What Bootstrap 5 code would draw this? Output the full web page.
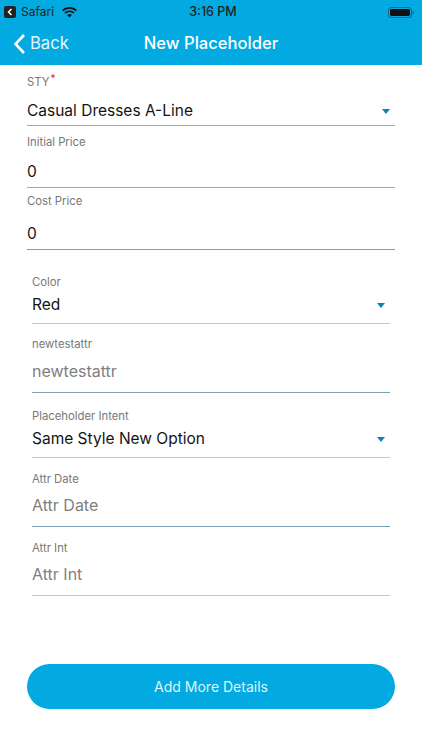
<!DOCTYPE html>
<html lang="en">
<head>
<meta charset="utf-8">
<title>New Placeholder</title>
<link href="https://cdn.jsdelivr.net/npm/bootstrap@5.3.0/dist/css/bootstrap.min.css" rel="stylesheet">
<style>
html,body{height:750px;overflow:hidden;background:#fff;}
body{font-family:Inter,"Liberation Sans",sans-serif;color:#111;}
.app-top{background:#02aae1;height:65px;}
.stat-bar{height:22px;padding:2px 8px 0 4px;font-size:12px;color:#222;}
.stat-left{width:160px;gap:5px;}
.stat-wifi{margin-left:3px;}
.stat-time{font-weight:500;font-size:12.5px;padding-left:8px;}
.stat-right{width:160px;}
.back-tile{width:12px;height:12px;background:#222;border-radius:2px;}
.nav-row{height:43px;padding-top:1px;color:#fff;}
.back-side{left:13px;top:0;bottom:0;font-size:16.6px;color:#e4f6fc;gap:4px;}
.nav-heading{font-size:16.6px;font-weight:500;margin:0;}
.form-wrap{height:599px;}
.group-a{padding:0 27px;}
.group-b{padding:0 32px;}
.fld{border-bottom:1px solid #86afc4;}
.fld-lite{border-bottom-color:#aecde0;}
.fld-dark{border-bottom-color:#7a9fb6;}
.fld-label{font-size:11.3px;line-height:14px;color:#777;}
.fld-value{font-size:15.5px;line-height:22px;color:#141414;}
.fld-ghost{color:#808080;font-size:16px;}
.req{color:#e0242c;font-size:10px;line-height:0;position:relative;top:-4px;left:1px;}
.caret-tri{width:0;height:0;border-left:4.5px solid transparent;border-right:4.5px solid transparent;border-top:5px solid #0f7fb5;margin-right:5px;}
.h-sty{height:61px;padding-top:10px;}
.h-sty .fld-value{margin-top:11px;}
.h-init{height:62px;padding-top:9px;}
.h-init .fld-value{margin-top:12px;}
.h-cost{height:62px;padding-top:6px;}
.h-cost .fld-value{margin-top:15px;}
.h-color{height:74px;padding-top:25px;}
.h-color .fld-value{margin-top:5px;}
.h-newt{height:69px;padding-top:13px;}
.h-newt .fld-value{margin-top:9px;}
.h-intent{height:65px;padding-top:16px;}
.h-intent .fld-value{margin-top:5px;}
.h-date{height:69px;padding-top:14px;}
.h-date .fld-value{margin-top:8px;}
.h-int{height:69px;padding-top:14px;}
.h-int .fld-value{margin-top:8px;}
.more-btn{height:45px;margin:68px 27px 0;width:368px;background:#02aae1;border:0;border-radius:23px;color:#dff5fc;font-size:14px;font-weight:400;display:block;padding:0;}
.more-btn:hover{background:#02aae1;color:#dff5fc;}
</style>
</head>
<body>
<header class="app-top">
  <div class="stat-bar d-flex align-items-center justify-content-between">
    <div class="stat-left d-flex align-items-center">
      <span class="back-tile d-flex align-items-center justify-content-center">
        <svg width="6" height="8" viewBox="0 0 6 8"><path d="M4.5 1 1.5 4l3 3" fill="none" stroke="#fff" stroke-width="1.5"/></svg>
      </span>
      <span>Safari</span>
      <svg class="stat-wifi" width="15" height="11" viewBox="0 0 15 11"><path d="M.6 3.6a10 10 0 0 1 13.8 0" fill="none" stroke="#111" stroke-width="1.7"/><path d="M3 6a6.6 6.6 0 0 1 9 0" fill="none" stroke="#111" stroke-width="1.7"/><path d="M5.2 8a3.4 3.4 0 0 1 4.6 0L7.5 10.6z" fill="#111"/></svg>
    </div>
    <div class="stat-time">3:16 PM</div>
    <div class="stat-right d-flex justify-content-end">
      <svg width="26" height="11" viewBox="0 0 26 11"><rect x=".5" y=".5" width="23" height="10" rx="2.6" fill="none" stroke="#333" stroke-opacity=".6"/><rect x="2" y="2" width="20" height="7" rx="1.4" fill="#111"/><path d="M24.6 3.7c.8.2 1.2.9 1.2 1.8s-.4 1.6-1.2 1.8z" fill="#333" fill-opacity=".6"/></svg>
    </div>
  </div>
  <div class="nav-row position-relative d-flex align-items-center justify-content-center">
    <div class="back-side position-absolute d-flex align-items-center">
      <svg width="13" height="22" viewBox="0 0 13 22"><path d="M11 2 2.5 11 11 20" fill="none" stroke="#fff" stroke-width="2.6"/></svg>
      <span>Back</span>
    </div>
    <h1 class="nav-heading">New Placeholder</h1>
  </div>
</header>
<main class="form-wrap">
  <div class="group-a">
    <div class="fld h-sty">
      <div class="fld-label">STY<span class="req">*</span></div>
      <div class="fld-value d-flex align-items-center justify-content-between">Casual Dresses A-Line<span class="caret-tri"></span></div>
    </div>
    <div class="fld h-init">
      <div class="fld-label">Initial Price</div>
      <div class="fld-value">0</div>
    </div>
    <div class="fld fld-dark h-cost">
      <div class="fld-label">Cost Price</div>
      <div class="fld-value">0</div>
    </div>
  </div>
  <div class="group-b">
    <div class="fld fld-lite h-color">
      <div class="fld-label">Color</div>
      <div class="fld-value d-flex align-items-center justify-content-between">Red<span class="caret-tri"></span></div>
    </div>
    <div class="fld fld-dark h-newt">
      <div class="fld-label">newtestattr</div>
      <div class="fld-value fld-ghost">newtestattr</div>
    </div>
    <div class="fld fld-lite h-intent">
      <div class="fld-label">Placeholder Intent</div>
      <div class="fld-value d-flex align-items-center justify-content-between">Same Style New Option<span class="caret-tri"></span></div>
    </div>
    <div class="fld fld-dark h-date">
      <div class="fld-label">Attr Date</div>
      <div class="fld-value fld-ghost">Attr Date</div>
    </div>
    <div class="fld fld-lite h-int">
      <div class="fld-label">Attr Int</div>
      <div class="fld-value fld-ghost">Attr Int</div>
    </div>
  </div>
  <button type="button" class="btn more-btn">Add More Details</button>
</main>
<script src="https://cdn.jsdelivr.net/npm/bootstrap@5.3.0/dist/js/bootstrap.bundle.min.js"></script>
</body>
</html>
